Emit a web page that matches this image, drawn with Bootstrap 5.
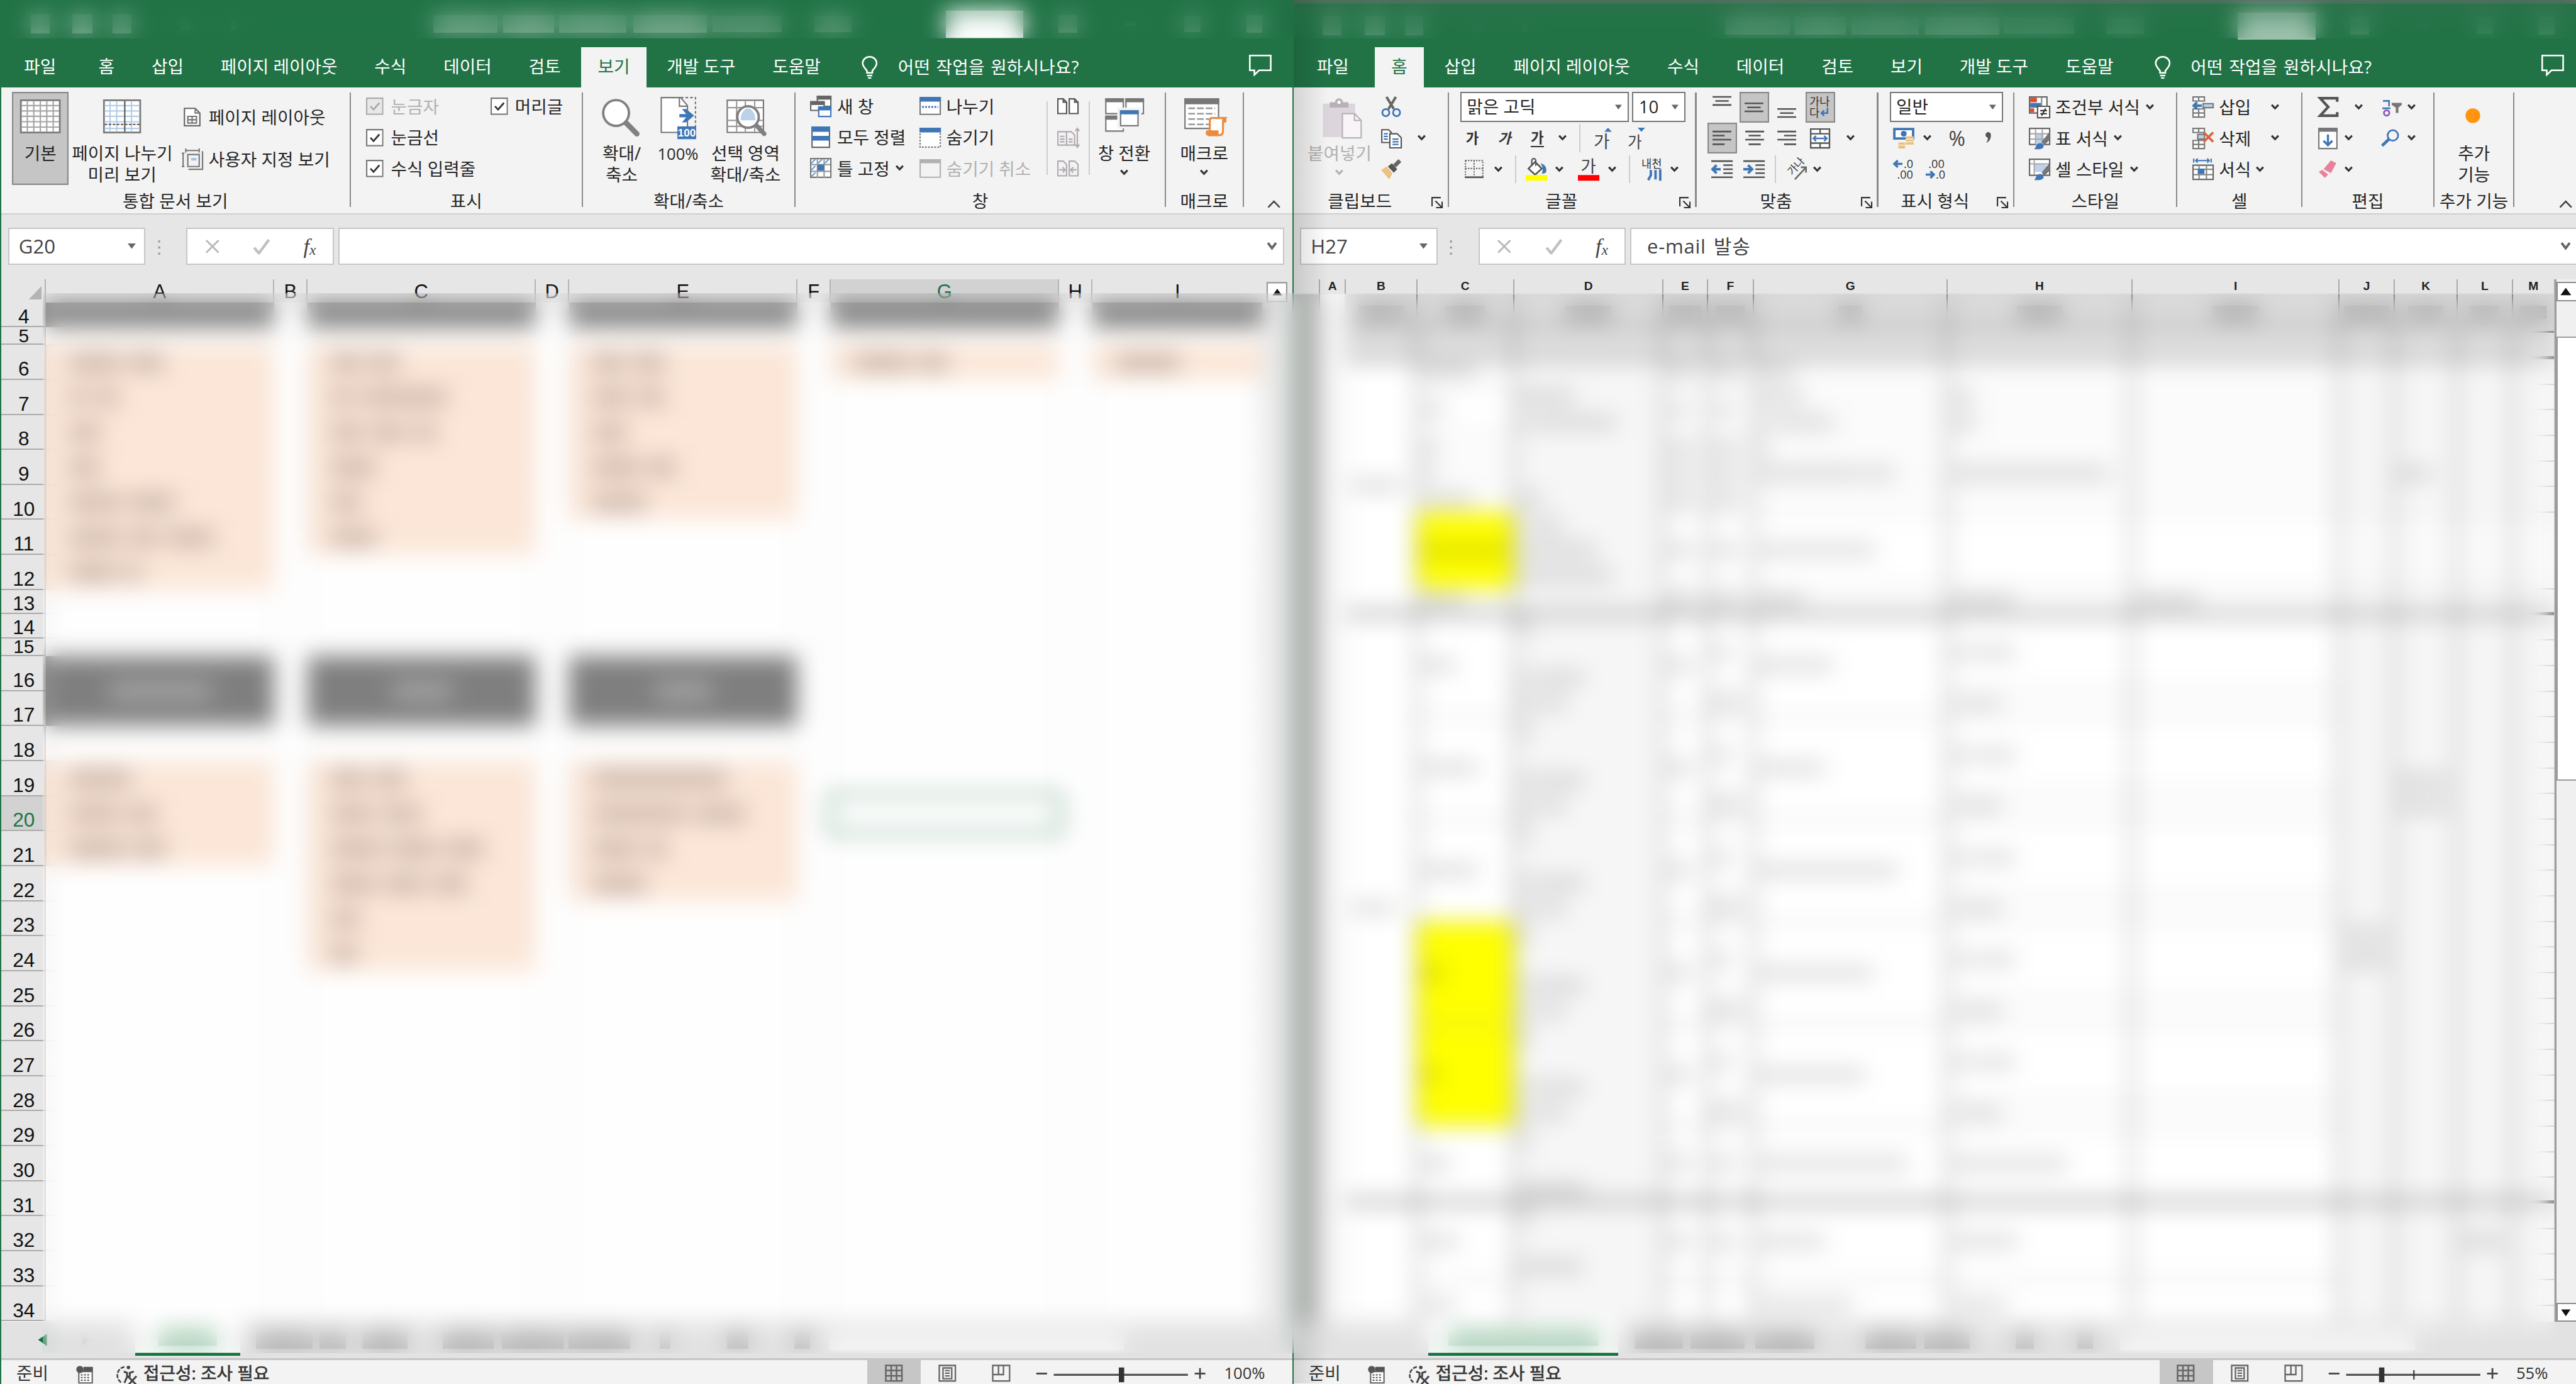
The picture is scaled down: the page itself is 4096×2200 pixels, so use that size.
<!DOCTYPE html>
<html lang="ko">
<head>
<meta charset="utf-8">
<meta name="viewport" content="width=device-width, initial-scale=1">
<title>Excel</title>
<link href="https://cdn.jsdelivr.net/npm/bootstrap@5.3.0/dist/css/bootstrap.min.css" rel="stylesheet">
<style>
html,body{margin:0;overflow:hidden;background:#e6e6e6}
body{font-family:"Open Sans","Noto Sans CJK KR",sans-serif;font-size:13px;line-height:16px;color:#262626}
.desk{zoom:2.133333;width:1920px;height:1031.25px;overflow:hidden}
.win{height:1031.25px;overflow:hidden;background:#e6e6e6;flex:none}
.win-l{width:964px;border-left:1px solid #217346;border-right:1px solid #217346}
.win-r{width:956px}
svg{display:block;flex:none;overflow:visible}
/* title and tabs */
.ttl{height:28.8px;background:#217346;flex:none}
.win-r .ttl{border-top:3px solid #666d69}
.ttl i{display:block;flex:none;background:#fff}
.win-r .ttl i{opacity:.55}
.tabs{height:36.2px;background:#217346;color:#fff;flex:none;padding-left:4.5px;gap:2.7px;font-size:13px}
.win-r .tabs{padding-left:5px}
.tabs .tb{height:30px;line-height:29px;padding:0 12.45px;white-space:nowrap}
.tabs .tb:first-child{margin-right:4px}
.tabs .on{background:#f3f3f3;color:#217346}
.tell{height:30px;line-height:29px;margin-left:15.5px;gap:15px;word-spacing:1px;letter-spacing:.08px}
.cmt{margin:0 15px 8px auto}
.win-r .cmt{margin-right:9px}
/* ribbon */
.rib{height:95px;background:#f3f3f3;border-bottom:1px solid #cfcfcf;flex:none}
.gr{height:94px;padding-top:3.3px;flex:none;white-space:nowrap}
.gb{height:69.4px;flex:none}
.gl{height:21.3px;line-height:24px;flex:none;text-align:center}
.gl .ln{width:16px;padding:9px 0 0 4px}
.sp{width:1px;background:#8a8a8a;margin:4px 0 5px;flex:none}
.sp2{width:1px;background:#cdcdcd;height:55px;margin-top:7px;flex:none}
.vs{width:1px;height:21px;background:#cdcdcd}
.big{height:69.4px;text-align:center;flex:none}
.big svg.ic{margin:4px auto 1.6px}
.big svg.cv{margin:4px auto 0}
.pressed{background:#c5c5c5;box-shadow:inset 0 0 0 1px #8a8a8a}
.off{color:#b1b1b1}
.r3{height:23.1px;display:flex;align-items:center;padding-bottom:1px}
.rw{height:23.13px;display:grid;align-items:center;justify-items:start}
.il{gap:4px}
.cbx{background:#fff;border:1px solid #777;height:22.6px;line-height:20px;padding:0 4px;margin-top:0}
.tg{width:21.7px;height:22.8px;display:flex;align-items:center;justify-content:center}
.l1{width:259.5px}.l2{width:172px}.l3{width:157.7px}.l4{width:274.9px}.l5{width:57.1px}
.bw42{width:41.9px}.bw75{width:75px;margin-left:2.5px}.bw59{width:59px}.bw51{width:51px}
.lst{margin-left:7px;padding-top:3.7px}
.lst .r3{height:31.3px}
.chk{gap:5.3px}
.q1{width:115px}.q2{width:183.5px}.q3{width:134.5px}.q4{width:100.5px}.q5{width:120.5px}.q6{width:92.2px}.q7{width:97.5px}.q8{width:58.5px}
.c1{grid-template-columns:27px auto;padding-left:7px}
.f2{padding-left:12.5px;grid-template-columns:24px 24.5px 20px 16px 11px 25px auto}
.f3{padding-left:11.7px;grid-template-columns:21.5px 15.8px 8.3px 21.5px 17.5px 22px 15.9px 9.3px 21px auto}
.a1{padding-left:10.8px;grid-template-columns:21.4px 27px 22.3px auto}
.a2{padding-left:8.3px;grid-template-columns:27.2px 24px 24.4px 27.6px auto}
.a3{padding-left:10.9px;grid-template-columns:24px 23.4px 8.2px 20px auto}
.n2{padding-left:11px;grid-template-columns:22px 19.5px 26.5px auto}
.n3{padding-left:11px;grid-template-columns:24.5px auto}
.s1{padding-left:10.5px;grid-template-columns:19.9px auto}
.e1{padding-left:11px;grid-template-columns:19.9px 38.3px auto}
.e1b{padding-left:11px;grid-template-columns:19.9px 27.3px auto}
.d1{padding-left:11.7px;grid-template-columns:26.5px 20.8px 18.7px auto}
.d2{padding-left:11.7px;grid-template-columns:19.2px 27.6px 19.1px auto}
.ga{font-size:10.5px;color:#333;line-height:14px}
.gu{border-bottom:1px solid #333;line-height:12px}
/* formula bar */
.fb{height:48.2px;padding-top:9.5px;flex:none;font-size:14.6px;color:#444}
.fb .bx{height:28px;background:#fff;border:1px solid #c6c6c6;flex:none;line-height:27px}
.nm{width:102.4px;margin-left:5.1px;padding:0 6px 0 7px}
.fn{width:109.8px;margin-left:12.5px}
.fn span{font-family:"Liberation Serif",serif;font-size:16px;color:#444}
.fn sub{font-size:11px;bottom:-1px}
.fx{flex:1 1 0!important;margin:0 6px 0 3.4px;padding:0 4px 0 11.5px}
.fx span{word-spacing:1.5px;letter-spacing:.35px}
.win-r .fx{margin-right:-8px}
.win-r .fx svg{margin-right:7px}
.dt{width:18px;padding-left:9px}
/* sheets */
.ghead,.grows{font-family:"Liberation Sans",Arial,sans-serif;font-size:14.5px;color:#111}
.lh{height:17.5px;display:grid;grid-template-columns:33.5px 170px 25px 170px 25px 170px 25px 170px 25px 126.5px 22px;flex:none;overflow:hidden}
.lh div{border-right:1px solid #b5b5b5;text-align:center;line-height:18.5px}
.lh .gsel{background:#d2d2d2;color:#217346;border-bottom:2px solid #217346}
.lg{height:759.3px;display:grid;grid-template-columns:33.5px 170px 25px 170px 25px 170px 25px 170px 25px 126.5px 22px;overflow:hidden;flex:none;background:#fff}
.lg .rh{grid-column:1;background:#e6e6e6;border-bottom:1px solid #ababab;display:flex;align-items:flex-end;justify-content:center;line-height:14px;border-right:1px solid #bbb;font-size:14.8px;padding-left:1px}
.lg .rh.cut{line-height:12px;font-size:14px}
.lg .rh.sel{background:#d2d2d2;color:#217346}
.lg .pc{background:#fce7d8;border:1px solid #ecdccf;display:flex;align-items:center;padding-left:16px;gap:6px}
.lg .dk{background:#7f7f7f;display:flex;align-items:center;justify-content:center}
.lg .gc{border-right:1px solid #e2e2e2;border-bottom:1px solid #eaeaea}
.lg .cur{border:2px solid #217346;margin:-2px}
.lg .sb{grid-column:11;background:#e9e9e9}
.wd{display:block;height:12px;background:rgba(60,40,40,.27);flex:none}
.dk .wd{background:rgba(255,255,255,.35)}
.rhd{height:11px;display:flex;font-size:9px;font-weight:600;font-family:"Liberation Sans",sans-serif;flex:none;line-height:10px;color:#222}
.rhd div{border-right:1px solid #aaa;text-align:center;flex:none}
.rgrid{height:766px;flex:none;overflow:hidden}
.rc{flex:none;background:#fff;border-right:1.4px solid #222}
.rc:last-child{border-right-color:#aaa}
.rc div{display:flex;align-items:center;border-bottom:1px solid #aaa;padding-left:3px;overflow:hidden}
.rc div.hd{background:#d9d9d9;height:28.8px;justify-content:center;border-bottom:1.6px solid #333;padding:0}
.rc div.sh{height:19.6px;background:#ececec;border-bottom:2.4px solid #444}
.rc div.th{border-bottom:2.6px solid #333}
.rc div.yl{background:#ff0}
.rc .wd{height:7px;background:rgba(0,0,0,.2)}
.rc .hd .wd{height:10px;background:rgba(0,0,0,.25)}
.vbar{width:16px;background:#f0f0f0;flex:none}
.vbar .ub{height:14.5px;border:1px solid #8d8d8d;background:#fff}
.vbar .tm{border:1px solid #9c9c9c;background:#fff;height:331px}
.st{height:28.4px;flex:none;background:#e2e2e2;border-bottom:1.5px solid #c6c6c6}
.st .act{background:linear-gradient(#fff,#fafcfa);border-bottom:2.4px solid #107040;height:25.4px;display:flex;align-items:center;justify-content:center}
.st .act i{height:12px;background:#a5ccb3}
.st .wd{height:13px;background:rgba(0,0,0,.2)}
.st .hs{height:13px;background:#f6f6f6;margin-top:8px}
.stat{height:18px;background:#f3f3f3;flex:none;line-height:19px;color:#333}
.stat b{font-weight:400;-webkit-text-stroke:.3px #333}
.stat .vw{width:40px;height:18px;display:flex;justify-content:center;padding-top:3.5px}
.stat .vw.on{background:#c6c6c6}
/* frosted panes lying over the title bars and the sheets */
.desk{position:relative}
.frost{position:absolute;backdrop-filter:blur(8.5px);pointer-events:none}
.frost-t{left:0;top:0;width:1920px;height:28.8px}
.frost-s{left:32px;top:218.6px;width:1872.4px;height:789.8px}
.shade{position:absolute;left:964px;top:0;width:26px;height:1031px;background:linear-gradient(90deg,rgba(0,0,0,.13),rgba(0,0,0,0))}
</style>
</head>
<body>
<svg width="0" height="0" class="position-absolute">
<defs>
<symbol id="cv" viewBox="0 0 7 5"><path d="M1 .8 3.5 3.4 6 .8" fill="none" stroke="#333" stroke-width="1.5"/></symbol>
<symbol id="cvg" viewBox="0 0 8 7"><path d="M1 1 4 5 7 1" fill="none" stroke="#666" stroke-width="1.8"/></symbol>
<symbol id="cvo" viewBox="0 0 7 5"><path d="M1 .8 3.5 3.4 6 .8" fill="none" stroke="#b1b1b1" stroke-width="1.5"/></symbol>
<symbol id="tri" viewBox="0 0 7 4"><path d="M.5 0h6L3.500 4z" fill="#666"/></symbol>
<symbol id="lau" viewBox="0 0 9 9"><path d="M.5 7V.5H7M3 3l4.500 4.500M8 3.500V8H3.500" fill="none" stroke="#333" stroke-width="1"/></symbol>
<symbol id="ck" viewBox="0 0 13 13"><path d="M.5.5h12v12H.5z" fill="#fff" stroke="#777"/><path d="m3.300 6.500 2.300 2.500L10 4" fill="none" stroke="#333" stroke-width="1.300"/></symbol>
<symbol id="cko" viewBox="0 0 13 13"><path d="M.5.5h12v12H.5z" fill="#e8e8e8" stroke="#aaa"/><path d="m3.300 6.500 2.300 2.500L10 4" fill="none" stroke="#aaa" stroke-width="1.300"/></symbol>
<symbol id="up" viewBox="0 0 10 6"><path d="m.7 5.500 4.300-4.500 4.300 4.500" fill="none" stroke="#444" stroke-width="1.200"/></symbol>
<symbol id="bulb" viewBox="0 0 12 17"><path d="M4 12.500V11C3 9.500.8 8 .8 5.300a5.200 4.700 0 0 1 10.400 0C11.200 8 9 9.500 8 11v1.500zM4 14.500h4M4.800 16.400h2.400" fill="none" stroke="#fff" stroke-width="1.200"/></symbol>
<symbol id="cm" viewBox="0 0 17 16"><path d="M.6.6h15.600v11H7.500L4 15v-3.400H.6z" fill="none" stroke="#fff" stroke-width="1.200"/></symbol>
<symbol id="xx" viewBox="0 0 12 12"><path d="m1 1 10 10M11 1 1 11" stroke="#b9b9b9" stroke-width="1.500"/></symbol>
<symbol id="vv" viewBox="0 0 13 12"><path d="m1 7 3.500 4L12 1" fill="none" stroke="#c0c0c0" stroke-width="2"/></symbol>
<symbol id="mac" viewBox="0 0 14 14"><path d="M2.500 4.500h10V13h-10z" fill="#fff" stroke="#666"/><path d="M6 1h7v3.500H6z" fill="#555"/><circle cx="3.300" cy="3" r="2.700" fill="#555"/><path d="M4 7h7M4 9h7M4 11h7" stroke="#555" stroke-dasharray="1.400 1"/></symbol>
<symbol id="acc" viewBox="0 0 16 15"><path d="M6 1A6.500 6.500 0 0 0 4 13" fill="none" stroke="#444" stroke-width="1.200" stroke-dasharray="3 1"/><circle cx="9" cy="1.500" r="1.300" fill="#444"/><path d="M5.500 4.500 8 5.500v3L6 13M13 4.500l-3 1v3M8.500 8l6.500 6.500M15 8l-6 6.500" fill="none" stroke="#444" stroke-width="1.400"/></symbol>
<symbol id="v1" viewBox="0 0 14 13"><path d="M.7.7h12v11.600h-12zM.7 4.500h12M.7 8.400h12M4.700.7v11.600M8.700.7v11.600" fill="none" stroke="#666" stroke-width="1.200"/></symbol>
<symbol id="v2" viewBox="0 0 14 13"><path d="M.7.7h12v11.600h-12zM3.500 2.600h6.500v8H3.500zM5 4.500h3.500M5 6.500h3.500M5 8.500h3.500" fill="none" stroke="#666" stroke-width="1.100"/></symbol>
<symbol id="v3" viewBox="0 0 14 13"><path d="M.7.7h12.600v11.600H.7zM.7 7.500h8V.7M5 .7v6.800" fill="none" stroke="#666" stroke-width="1.100"/></symbol>
</defs>
</svg>
<div class="desk d-flex">

<!-- left window: view tab -->
<div class="win win-l d-flex flex-column">
<div class="ttl d-flex align-items-center" data-title></div>
<div class="tabs d-flex align-items-end">
<div class="tb">파일</div><div class="tb">홈</div><div class="tb">삽입</div><div class="tb">페이지 레이아웃</div><div class="tb">수식</div><div class="tb">데이터</div><div class="tb">검토</div><div class="tb on">보기</div><div class="tb">개발 도구</div><div class="tb">도움말</div>
<div class="tell d-flex align-items-center"><svg width="12" height="17"><use href="#bulb"/></svg>어떤 작업을 원하시나요?</div>
<svg class="cmt" width="17" height="16"><use href="#cm"/></svg>
</div>
<div class="rib d-flex">
 <div class="gr l1 d-flex flex-column">
  <div class="gb d-flex" style="padding-left:8.2px">
   <div class="big bw42 pressed"><svg class="ic" width="32" height="32"><path d="M1.500 2.500h29v24h-29z" fill="#fff" stroke="#7a7a7a" stroke-width="1.300"/><path d="M6.300 3v23M11.100 3v23M16 3v23M20.800 3v23M25.600 3v23M2 6.500h28M2 10.500h28M2 14.500h28M2 18.500h28M2 22.500h28" stroke="#a5a5a5"/></svg>기본</div>
   <div class="big bw75"><svg class="ic" width="32" height="32"><path d="M2.500 2.500h27v24h-27z" fill="#fff" stroke="#7a7a7a" stroke-width="1.300"/><path d="M7 3v23M12 3v23M23 3v23M3 6.500h26M3 10.500h26M3 14.500h26M3 18.500h26M3 23.500h26" stroke="#b4cde8"/><path d="M18 3v23" stroke="#555"/><path d="M3 20.500h26" stroke="#555" stroke-dasharray="2 1"/></svg>페이지 나누기<br>미리 보기</div>
   <div class="lst">
    <div class="r3 il"><svg width="16" height="16"><path d="M2 1.500h8l3.500 3.500v9.500H2z" fill="#fff" stroke="#666"/><path d="M10 1.500V5h3.500M4.500 7.500h6.500v5h-6.500zM7.700 7.500v5M4.500 10h6.500" fill="none" stroke="#777"/></svg>페이지 레이아웃</div>
    <div class="r3 il"><svg width="16" height="16"><path d="M3 0v3M13 0v3M3 1.500h10M1 3.500v10M0 3.500h2M0 13.500h2M4.500 4.500h8.500v9h-8.500z" fill="none" stroke="#777"/><path d="M7 7h4v2H7z" fill="#a8c6e6"/><path d="M15.500 2v13.500H5" fill="none" stroke="#777"/></svg>사용자 지정 보기</div>
   </div>
  </div>
  <div class="gl">통합 문서 보기</div>
 </div>
 <div class="sp"></div>
 <div class="gr l2 d-flex flex-column">
  <div class="gb d-flex" style="padding-left:11.600px">
   <div style="width:92.500px">
    <div class="r3 chk off"><svg width="13" height="13"><use href="#cko"/></svg>눈금자</div>
    <div class="r3 chk"><svg width="13" height="13"><use href="#ck"/></svg>눈금선</div>
    <div class="r3 chk"><svg width="13" height="13"><use href="#ck"/></svg>수식 입력줄</div>
   </div>
   <div><div class="r3 chk"><svg width="13" height="13"><use href="#ck"/></svg>머리글</div></div>
  </div>
  <div class="gl">표시</div>
 </div>
 <div class="sp"></div>
 <div class="gr l3 d-flex flex-column">
  <div class="gb d-flex ps-2">
   <div class="big bw42"><svg class="ic" width="32" height="32"><circle cx="12" cy="12" r="9.600" fill="#fff" stroke="#808080" stroke-width="1.800"/><path d="m19.500 19.500 8 8" stroke="#808080" stroke-width="4" stroke-linecap="round"/></svg>확대/<br>축소</div>
   <div class="big bw42"><svg class="ic" width="32" height="32"><path d="M3.500.5H18l5 6v20H3.500z" fill="#fff" stroke="#777"/><path d="M17 .5V7h6" fill="none" stroke="#777"/><path d="M18 .5h11v22" fill="none" stroke="#777" stroke-dasharray="2 1.500"/><path d="M17 14h8" stroke="#3f76b5" stroke-width="2.400"/><path d="m22 9 6 5-6 5h-3l4-5-4-5z" fill="#3f76b5"/><path d="M15.500 22h14v9.500h-14z" fill="#3f76b5"/><text x="22.500" y="29.500" font-size="8" font-weight="700" fill="#fff" text-anchor="middle" font-family="Liberation Sans">100</text></svg><span style="font-size:12px">100%</span></div>
   <div class="big bw59"><svg class="ic" width="32" height="32"><path d="M2.500 2.500h27v24h-27z" fill="#fff" stroke="#777"/><path d="M9.500 3v23M16 3v23M23 3v23M3 8h26M3 17.500h26M3 22h26" stroke="#9a9a9a"/><circle cx="18" cy="15" r="8" fill="#fff" stroke="#808080" stroke-width="1.800"/><path d="M12.500 17.500a5.500 9 0 0 1 11 0z" fill="#bcd2ea"/><path d="m24.500 21.500 5.500 6" stroke="#808080" stroke-width="3.400" stroke-linecap="round"/></svg>선택 영역<br>확대/축소</div>
  </div>
  <div class="gl">확대/축소</div>
 </div>
 <div class="sp"></div>
 <div class="gr l4 d-flex flex-column">
  <div class="gb d-flex" style="padding-left:10.800px">
   <div style="width:81.400px">
    <div class="r3 il"><svg width="16" height="16"><path d="M5.500 1h10v7h-10z" fill="#fff" stroke="#666"/><path d="M5 0h11v3H5z" fill="#666"/><path d="M.5 5h10v6H.5z" fill="#fff" stroke="#666"/><path d="M0 4h11v3H0z" fill="#666"/><path d="M6.500 9h9v6.500h-9z" fill="#fff" stroke="#3f76b5"/><path d="M6 8h10v3H6z" fill="#3f76b5"/></svg>새 창</div>
    <div class="r3 il"><svg width="16" height="16"><path d="M1.500.5h13v15h-13z" fill="#fff" stroke="#666"/><path d="M1 0h14v4H1zM1 7h14v3.500H1z" fill="#3f76b5"/></svg>모두 정렬</div>
    <div class="r3 il"><svg width="16" height="16"><path d="M.5.5h15v14H.5z" fill="#fff" stroke="#777"/><path d="M5.500 1v14M10.500 1v14M1 5h14M1 10h14" stroke="#999"/><path d="m1 4 3-3M6 4l3-3M11 4l3-3M1 9l3-3M1 14l3-3" stroke="#6a9bd1"/><path d="M5.500 5h5v4.500h-5z" fill="#3f76b5"/></svg>틀 고정<svg width="7" height="5"><use href="#cv"/></svg></div>
   </div>
   <div style="width:94.600px">
    <div class="r3 il"><svg width="16" height="14"><path d="M.5.5h15v12.500H.5z" fill="#fff" stroke="#777"/><path d="M0 0h16v3.500H0z" fill="#3f76b5"/><path d="M2 7.500h12" stroke="#3f76b5" stroke-width="1.300" stroke-dasharray="1.300 1"/></svg>나누기</div>
    <div class="r3 il"><svg width="16" height="15"><path d="M.5.5h15v14H.5z" fill="#fff" stroke="#777" stroke-dasharray="1.300 1"/><path d="M0 0h16v3.500H0z" fill="#3f76b5"/></svg>숨기기</div>
    <div class="r3 il off"><svg width="16" height="14"><path d="M.5.5h15v13H.5z" fill="#f3f3f3" stroke="#b1b1b1"/><path d="M0 0h16v3H0z" fill="#b1b1b1"/></svg>숨기기 취소</div>
   </div>
   <div class="sp2"></div>
   <div style="width:30.500px;padding-left:7px">
    <div class="r3"><svg width="16" height="12"><path d="M.5.500h4l2.500 2.500v8.500H.5zM9 .500h4L15.500 3v8.500H9zM4.500.500V3H7M13 .500V3h2.500" fill="#fff" stroke="#555"/></svg></div>
    <div class="r3"><svg width="16" height="14"><path d="M.5 2.500h6.500v10H.5zM7 2.500h3.500L13 5v7.500H7z" fill="#f3f3f3" stroke="#b1a9b1"/><path d="M2 6h3.500M2 8h3.500M8.500 8h3M8.500 10h3M2 10h3.500M15 0v14M13.500 2 15 0l1.500 2M13.500 12l1.500 2 1.500-2" stroke="#b1a9b1" fill="none"/></svg></div>
    <div class="r3"><svg width="16" height="12"><path d="M.5.500h4l2.500 2.500v8.500H.5zM9 .500h4L15.500 3v8.500H9z" fill="#f3f3f3" stroke="#b1a9b1"/><path d="M1.500 7h4M4 5l2 2-2 2M14.500 7h-4M12 5l-2 2 2 2" fill="none" stroke="#b1a9b1"/></svg></div>
   </div>
   <div class="sp2"></div>
   <div class="big bw51"><svg class="ic" width="32" height="32"><path d="M2.500 1.500h13v11h-13zM17.500 1.500h13v11h-13zM2.500 14.500h13v11h-13z" fill="#fff" stroke="#777"/><path d="M2 1h14v3H2zM17 1h14v3H17zM2 14h14v3H2z" fill="#777"/><path d="M12.500 9.500h15v12.500h-15z" fill="#fff" stroke="#f3f3f3" stroke-width="3"/><path d="M13.500 10.500h13v11h-13z" fill="#fff" stroke="#777"/><path d="M13 10h14v3H13z" fill="#3f76b5"/></svg>창 전환<svg class="cv" width="7" height="5"><use href="#cv"/></svg></div>
  </div>
  <div class="gl">창</div>
 </div>
 <div class="sp"></div>
 <div class="gr l5 d-flex flex-column">
  <div class="big"><svg class="ic" width="32" height="32"><path d="M1.500 1.500h25v22h-25z" fill="#fff" stroke="#777"/><path d="M1 1h26v4.500H1z" fill="#777"/><path d="M4 8.500h20M4 12.500h20M4 16.500h20M4 20.500h16" stroke="#999" stroke-width="1.200" stroke-dasharray="5 1.500"/><path d="M21 15.800h10c-1.500 1-1.200 3-1.200 4v5.700c0 2-.8 3-2.600 3H18.500c1.800-.5 1.500-2 1.500-3.500v-6.200c0-1.500 0-2.500 1-3z" fill="#fff" stroke="#ed8b3c" stroke-width="1.500"/><path d="M29.500 15.200h2.500c.8 1.500.5 3 0 4h-2.500zM17.500 25h9v3.800h-8c-1.500 0-2-2-1-3.800z" fill="#ed8b3c"/></svg>매크로<svg class="cv" width="7" height="5"><use href="#cv"/></svg></div>
  <div class="gl">매크로</div>
 </div>
 <div class="sp"></div>
 <div class="ms-auto align-self-end" style="padding:0 8.500px 4px 0"><svg width="10" height="6"><use href="#up"/></svg></div>
</div>
<div class="fb d-flex">
 <div class="bx nm d-flex align-items-center justify-content-between">G20<svg width="7" height="4"><use href="#tri"/></svg></div>
 <div class="dt"><svg width="2" height="28"><path d="M1 9.500v11" stroke="#999" stroke-width="1.500" stroke-dasharray="1.500 3"/></svg></div>
 <div class="bx fn d-flex align-items-center justify-content-around"><svg width="12" height="11"><use href="#xx"/></svg><svg width="13" height="12"><use href="#vv"/></svg><span class="fst-italic">f<sub>x</sub></span></div>
 <div class="bx fx d-flex align-items-center justify-content-end"><svg width="8" height="7"><use href="#cvg"/></svg></div>
</div>
<div class="lh ghead"><div><svg width="33" height="17"><path d="M30 5v10H20.500z" fill="#b4b4b4"/></svg></div><div>A</div><div>B</div><div>C</div><div>D</div><div>E</div><div>F</div><div class="gsel">G</div><div>H</div><div class="border-0">I</div><div class="d-flex border-0"><svg width="15" height="17" class="ms-1"><path d="M-.5 2.500h14.500v14H-.5z" fill="#fff" stroke="#999"/><path d="M7 7l3.500 5h-7z" fill="#111"/></svg></div></div>
<div class="lg grows" id="lgrid"></div>
<div class="st d-flex" id="ltabs"></div>
<div class="stat d-flex" data-zoom="100"></div>
</div>

<!-- right window: home tab -->
<div class="win win-r d-flex flex-column">
<div class="ttl d-flex align-items-center" data-title></div>
<div class="tabs d-flex align-items-end">
<div class="tb">파일</div><div class="tb on">홈</div><div class="tb">삽입</div><div class="tb">페이지 레이아웃</div><div class="tb">수식</div><div class="tb">데이터</div><div class="tb">검토</div><div class="tb">보기</div><div class="tb">개발 도구</div><div class="tb">도움말</div>
<div class="tell d-flex align-items-center"><svg width="12" height="17"><use href="#bulb"/></svg>어떤 작업을 원하시나요?</div>
<svg class="cmt" width="17" height="16"><use href="#cm"/></svg>
</div>
<div class="rib d-flex">
 <div class="gr q1 d-flex flex-column">
  <div class="gb d-flex" style="padding-left:10.500px">
   <div class="big off" style="width:47.500px"><svg class="ic" width="32" height="32"><path d="M4 5h24v25H4z" fill="#dcd6dc"/><path d="M9 8V4h4a3 3 0 0 1 6 0h4v4z" fill="#b8b2b8"/><circle cx="16" cy="4" r="1.200" fill="#fff"/><path d="M18.500 12.500h9l5 5v13h-14z" fill="#f8f4f8" stroke="#b8b2b8"/><path d="M27.500 12.500v5h5" fill="none" stroke="#b8b2b8"/></svg>붙여넣기<svg class="cv" width="7" height="5"><use href="#cvo"/></svg></div>
   <div>
    <div class="rw c1"><svg width="16" height="16"><path d="m4.500.5 5.500 9M11.500.5 6 9.500" stroke="#666" stroke-width="1.900"/><circle cx="4" cy="12.200" r="2.600" fill="none" stroke="#3f76b5" stroke-width="1.300"/><circle cx="12" cy="12.200" r="2.600" fill="none" stroke="#3f76b5" stroke-width="1.300"/></svg></div>
    <div class="rw c1"><svg width="16" height="16"><path d="M1 1.500h5l2 2V11H1z" fill="#fff" stroke="#555"/><path d="M7 4.500h5.500L15.500 7.500v7.500H7z" fill="#fff" stroke="#555"/><path d="M2.500 4.500h3M2.500 6.500h3M2.500 8.500h3M9 8.500h4.500M9 10.500h4.500M9 12.500h4.500" stroke="#3f76b5"/></svg><svg width="7" height="5"><use href="#cv"/></svg></div>
    <div class="rw c1"><svg width="16" height="16"><path d="m.5 8.500 4-2.500 4.500 5-2.500 4.500z" fill="#eac282"/><path d="m5.500 6 3-2.500 4 4.500-2.500 2.500z" fill="#555"/><path d="m10.500 5.500 4-4" stroke="#666" stroke-width="3"/></svg></div>
   </div>
  </div>
  <div class="gl d-flex"><div class="flex-grow-1">클립보드</div><div class="ln"><svg width="9" height="9"><use href="#lau"/></svg></div></div>
 </div>
 <div class="sp"></div>
 <div class="gr q2 d-flex flex-column">
  <div class="gb">
   <div class="d-flex" style="height:23.130px;padding-left:8.300px;gap:2.500px"><div class="cbx d-flex align-items-center justify-content-between" style="width:125.700px">맑은 고딕<svg width="6" height="4"><use href="#tri"/></svg></div><div class="cbx d-flex align-items-center justify-content-between" style="width:39.800px">10<svg width="6" height="4"><use href="#tri"/></svg></div></div>
   <div class="rw f2"><span class="ga fw-bold">가</span><span class="ga fst-italic fw-bold">가</span><span class="ga gu fw-bold">가</span><svg width="7" height="5"><use href="#cv"/></svg><div class="vs"></div><svg width="14" height="16"><text x="0" y="15" font-size="13" fill="#444">가</text><path d="M8 3h5.500L10.700 0z" fill="#3f76b5"/></svg><svg width="14" height="16"><text x="0" y="15" font-size="11.500" fill="#444">가</text><path d="M7.500 0H13l-2.700 3z" fill="#3f76b5"/></svg></div>
   <div class="rw f3"><svg width="14" height="14"><path d="M.5.5h13v12M.5.500v12M7 .500v12M.5 6.500h13" fill="none" stroke="#666" stroke-dasharray="1 1"/><path d="M0 13h14" stroke="#555" stroke-width="1.300"/></svg><svg width="7" height="5"><use href="#cv"/></svg><div class="vs"></div><svg width="16" height="17"><path d="m2 8 5-5 5 5-5 4.500z" fill="#fff" stroke="#555" stroke-width="1.200"/><path d="M4.500 6V2a1.500 1.500 0 0 1 3 0v4" fill="none" stroke="#555"/><path d="M11 4c4 1 5 4 4 7l-3 1c1-3 1-5-1-8z" fill="#3f76b5"/><path d="M0 12.800h16V17H0z" fill="#ff0"/></svg><svg width="7" height="5"><use href="#cv"/></svg><svg width="16" height="17"><text x="2" y="11" font-size="12.500" fill="#444">가</text><path d="M0 12.800h16V17H0z" fill="red"/></svg><svg width="7" height="5"><use href="#cv"/></svg><div class="vs"></div><svg width="16" height="17"><text x="0" y="7.500" font-size="8.300" fill="#333">내천</text><path d="M7 9v4l-2 3.500M10.500 9v7M14 8.500V17" fill="none" stroke="#3f76b5" stroke-width="1.800"/></svg><svg width="7" height="5"><use href="#cv"/></svg></div>
  </div>
  <div class="gl d-flex"><div class="flex-grow-1">글꼴</div><div class="ln"><svg width="9" height="9"><use href="#lau"/></svg></div></div>
 </div>
 <div class="sp"></div>
 <div class="gr q3 d-flex flex-column">
  <div class="gb">
   <div class="rw a1"><svg width="16" height="16"><path d="M1 .5h14M3 3.500h10M1 6.500h14" stroke="#555" stroke-width="1.200"/></svg><div class="tg pressed"><svg width="14" height="10"><path d="M0 2h14M2 5h10M0 8h14" stroke="#555" stroke-width="1.200"/></svg></div><svg width="16" height="16"><path d="M1 9.500h14M3 12.500h10M1 15.500h14" stroke="#555" stroke-width="1.200"/></svg><div class="tg pressed"><svg width="16" height="17"><text x="0" y="7.500" font-size="8.300" fill="#333">가나</text><text x="0" y="16" font-size="8.300" fill="#333">다</text><path d="M13.500 9v4h-4M11 11l-2 2 2 2" fill="none" stroke="#3f76b5" stroke-width="1.200"/></svg></div></div>
   <div class="rw a2"><div class="tg pressed"><svg width="14" height="12"><path d="M0 1h14M0 4h9M0 7h14M0 10.500h9" stroke="#555" stroke-width="1.200"/></svg></div><svg width="16" height="12"><path d="M1 1h14M3.500 4h9M1 7h14M3.500 10.500h9" stroke="#555" stroke-width="1.200"/></svg><svg width="16" height="12"><path d="M1 1h14M6 4h9M1 7h14M6 10.500h9" stroke="#555" stroke-width="1.200"/></svg><svg width="16" height="16"><path d="M1 1h14v14H1zM1 4.500h14M1 11.500h14M8 1v3.500M8 11.500V15" fill="#fff" stroke="#555" stroke-width="1.100"/><path d="M3 8h10M5 6 3 8l2 2M11 6l2 2-2 2" fill="none" stroke="#3f76b5" stroke-width="1.200"/></svg><svg width="7" height="5"><use href="#cv"/></svg></div>
   <div class="rw a3"><svg width="16" height="14"><path d="M0 1h16M9 4h7M9 7h7M9 10h7M0 13h16" stroke="#555" stroke-width="1.200"/><path d="M1 7h6M4 4 1 7l3 3" fill="none" stroke="#3f76b5" stroke-width="1.900"/></svg><svg width="16" height="14"><path d="M0 1h16M9 4h7M9 7h7M9 10h7M0 13h16" stroke="#555" stroke-width="1.200"/><path d="M0 7h6M3.500 4l3 3-3 3" fill="none" stroke="#3f76b5" stroke-width="1.900"/></svg><div class="vs"></div><svg width="16" height="16"><text font-size="7.800" fill="#333" transform="translate(5 13) rotate(-48)">가나</text><path d="m7 15.500 8-8.500M11.500 6.500h3.800v4" fill="none" stroke="#666" stroke-width="1.200"/></svg><svg width="7" height="5"><use href="#cv"/></svg></div>
  </div>
  <div class="gl d-flex"><div class="flex-grow-1">맞춤</div><div class="ln"><svg width="9" height="9"><use href="#lau"/></svg></div></div>
 </div>
 <div class="sp"></div>
 <div class="gr q4 d-flex flex-column">
  <div class="gb">
   <div style="height:23.130px;padding-left:8.400px"><div class="cbx d-flex align-items-center justify-content-between" style="width:84.600px">일반<svg width="6" height="4"><use href="#tri"/></svg></div></div>
   <div class="rw n2"><svg width="16" height="16"><path d="M1 1h14v7H1z" fill="#fff" stroke="#3f76b5" stroke-width="1.800"/><circle cx="8" cy="4.500" r="2.200" fill="#3f76b5"/><path d="M9.500 6.500h6v6h-6zM4 11h5v4.500H4z" fill="#ebbd7b"/><path d="M9.500 8.500h6M9.500 10.500h6M4 13h5" stroke="#f3f3f3" stroke-width=".7"/></svg><svg width="7" height="5"><use href="#cv"/></svg><span style="font-size:15px;color:#444">%</span><svg width="6" height="10"><path d="M1 2.500a2 2 0 1 1 4 0C5 5.500 4 7.500 1.500 8.500 2.500 7 3 6 2.500 4.500A2 2 0 0 1 1 2.500z" fill="#555"/></svg></div>
   <div class="rw n3"><svg width="16" height="15"><text x="8" y="6.500" font-size="8.500" fill="#333">.0</text><text x="3" y="14.500" font-size="8.500" fill="#333">.00</text><path d="M1 3.500h6M3.600 1 1 3.500 3.600 6" fill="none" stroke="#3f76b5" stroke-width="1.700"/></svg><svg width="16" height="15"><text x="2" y="6.500" font-size="8.500" fill="#333">.00</text><text x="7.500" y="14.500" font-size="8.500" fill="#333">.0</text><path d="M0 11.500h6M3.500 9 6 11.500 3.500 14" fill="none" stroke="#3f76b5" stroke-width="1.700"/></svg></div>
  </div>
  <div class="gl d-flex"><div class="flex-grow-1">표시 형식</div><div class="ln"><svg width="9" height="9"><use href="#lau"/></svg></div></div>
 </div>
 <div class="sp"></div>
 <div class="gr q5 d-flex flex-column">
  <div class="gb">
   <div class="rw s1"><svg width="16" height="16"><path d="M.5.500h13v12H.5z" fill="#fff" stroke="#666"/><path d="M1 1h5v3.500H1zM1 9h3v3H1z" fill="#d8502f"/><path d="M1 5h8v3.500H1z" fill="#3f76b5"/><path d="M9.500 1v6" stroke="#888"/><path d="M6.500 7.500h9v8.500h-9z" fill="#fff" stroke="#555"/><path d="M8.500 10.700h5M8.500 13h5M12.500 9l-3 5.500" stroke="#333"/></svg><div class="d-flex align-items-center il">조건부 서식<svg width="7" height="5"><use href="#cv"/></svg></div></div>
   <div class="rw s1"><svg width="16" height="16"><path d="M.5.500h15v12H.5z" fill="#fff" stroke="#666"/><path d="M5 4.500h6v8H5z" fill="#bcd2ea"/><path d="M5 1v11M10 1v11M1 4.500h14M1 8.500h14" stroke="#aaa"/><path d="m9.500 10.500 6-7.500v6l-4 4z" fill="#777"/><path d="M4 16c1.500-1 1-4 4-4.500 2-.3 4 2 2.500 3.500S6 16 4 16z" fill="#3f76b5"/></svg><div class="d-flex align-items-center il">표 서식<svg width="7" height="5"><use href="#cv"/></svg></div></div>
   <div class="rw s1"><svg width="16" height="16"><path d="M.5.500h15v12H.5z" fill="#fff" stroke="#666"/><path d="M4 4h9v6H4z" fill="#bcd2ea"/><path d="M4 1v11M1 4h14" stroke="#aaa"/><path d="m9.500 10.500 6-7.500v6l-4 4z" fill="#777"/><path d="M4 16c1.500-1 1-4 4-4.500 2-.3 4 2 2.500 3.500S6 16 4 16z" fill="#3f76b5"/></svg><div class="d-flex align-items-center il">셀 스타일<svg width="7" height="5"><use href="#cv"/></svg></div></div>
  </div>
  <div class="gl">스타일</div>
 </div>
 <div class="sp"></div>
 <div class="gr q6 d-flex flex-column">
  <div class="gb">
   <div class="rw e1"><svg width="16" height="16"><path d="M.5.500h8.500v3H.5zM4.700.500v3M.5 9.500h8.500v6H.5zM4.700 9.500v6M.5 12.500h8.500" fill="#fff" stroke="#777"/><path d="M8 5.500h7.500v3H8z" fill="#bcd2ea" stroke="#777"/><path d="M1 7h6M3.500 4.500 1 7l2.500 2.500" fill="none" stroke="#3f76b5" stroke-width="1.900"/></svg>삽입<svg width="7" height="5"><use href="#cv"/></svg></div>
   <div class="rw e1"><svg width="16" height="16"><path d="M.5.500h8.500v3H.5zM4.700.500v3M.5 9.500h8.500v6H.5zM4.700 9.500v6M.5 12.500h8.500" fill="#fff" stroke="#777"/><path d="M4 5h5v3.500H4z" fill="#bcd2ea" stroke="#777"/><path d="m8.500 3.500 7 7M15.500 3.500l-7 7" stroke="#dc6244" stroke-width="1.700"/></svg>삭제<svg width="7" height="5"><use href="#cv"/></svg></div>
   <div class="rw e1b"><svg width="16" height="16"><path d="M1 0v3M14 0v3M2 1.500h11M4 0 2.500 1.500 4 3M11 0l1.500 1.500L11 3" fill="none" stroke="#3f76b5"/><path d="M.5 5h15v10.500H.5z" fill="#fff" stroke="#666"/><path d="M5 5v10M10.500 5v10M1 8h14M1 12h14" stroke="#888"/><path d="M4 7.500h5v4H4z" fill="#3f76b5"/></svg>서식<svg width="7" height="5"><use href="#cv"/></svg></div>
  </div>
  <div class="gl">셀</div>
 </div>
 <div class="sp"></div>
 <div class="gr q7 d-flex flex-column">
  <div class="gb">
   <div class="rw d1"><svg width="15" height="15"><path d="M14.200 3.600V1H1.500l6 6.500-6 6.500h12.700v-2.600" fill="none" stroke="#555" stroke-width="2"/></svg><svg width="7" height="5"><use href="#cv"/></svg><svg width="15" height="15"><path d="M1 3h4.500v4M.5 8.500h6" fill="none" stroke="#3f76b5" stroke-width="1.200"/><circle cx="3.700" cy="12" r="2" fill="none" stroke="#8d58b5" stroke-width="1.300"/><path d="M7.500 4.500h7.500v1.500l-2.500 2v4h-2v-4l-3-2z" fill="#777"/></svg><svg width="7" height="5"><use href="#cv"/></svg></div>
   <div class="rw d2"><svg width="15" height="16"><path d="M.5.500h13.500v15H.5z" fill="#fff" stroke="#777"/><path d="M0 0h14.500v3H0z" fill="#777"/><path d="M7.300 5v8M4 9.700l3.300 3.300 3.300-3.300" fill="none" stroke="#3f76b5" stroke-width="1.600"/></svg><svg width="7" height="5"><use href="#cv"/></svg><svg width="14" height="14"><circle cx="8.800" cy="4.800" r="3.900" fill="none" stroke="#3f76b5" stroke-width="1.300"/><path d="m6 7.500-5.200 5" stroke="#3f76b5" stroke-width="2.200"/></svg><svg width="7" height="5"><use href="#cv"/></svg></div>
   <div class="rw d2"><svg width="15" height="14"><path d="m4 7 5.500-6.500 4 2-4 7.500z" fill="#e8819a"/><path d="m.5 9 2.500-1.500L7.500 11 5 13.500z" fill="#e8819a"/></svg><svg width="7" height="5"><use href="#cv"/></svg></div>
  </div>
  <div class="gl">편집</div>
 </div>
 <div class="sp"></div>
 <div class="gr q8 d-flex flex-column">
  <div class="big"><svg class="ic" width="32" height="32"><circle cx="15" cy="14" r="5.500" fill="#ff9410"/></svg>추가<br>기능</div>
  <div class="gl">추가 기능</div>
 </div>
 <div class="sp"></div>
 <div class="ms-auto align-self-end" style="padding:0 2.500px 4px 0"><svg width="10" height="6"><use href="#up"/></svg></div>
</div>
<div class="fb d-flex">
 <div class="bx nm d-flex align-items-center justify-content-between">H27<svg width="7" height="4"><use href="#tri"/></svg></div>
 <div class="dt"><svg width="2" height="28"><path d="M1 9.500v11" stroke="#999" stroke-width="1.500" stroke-dasharray="1.500 3"/></svg></div>
 <div class="bx fn d-flex align-items-center justify-content-around"><svg width="12" height="11"><use href="#xx"/></svg><svg width="13" height="12"><use href="#vv"/></svg><span class="fst-italic">f<sub>x</sub></span></div>
 <div class="bx fx d-flex align-items-center justify-content-between"><span>e-mail 발송</span><svg width="8" height="7"><use href="#cvg"/></svg></div>
</div>
<div class="d-flex flex-none" style="height:776.800px">
 <div style="width:940.400px" class="flex-shrink-0">
  <div class="rhd" id="rhead"></div>
  <div class="rgrid d-flex" id="rgrid"></div>
 </div>
 <div style="width:3.600px;border-left:1px solid #999"></div>
 <div class="vbar" style="padding-top:2px"><div class="ub"><svg width="14" height="12"><path d="M6 3.500 10 9H2z" fill="#111"/></svg></div><div style="height:25.900px"></div><div class="tm"></div><div style="height:389px"></div><div class="ub"><svg width="14" height="12"><path d="M6 9 9.500 4h-7z" fill="#111"/></svg></div></div>
</div>
<div class="st d-flex" id="rtabs"></div>
<div class="stat d-flex" data-zoom="55"></div>
</div>

<div class="shade"></div>
<div class="frost frost-t"></div>
<div class="frost frost-s"></div>
</div>
<script src="https://cdn.jsdelivr.net/npm/bootstrap@5.3.0/dist/js/bootstrap.bundle.min.js"></script>
<script>
const bars = a => (a || []).map(w => `<i class="wd" style="width:${w}px"></i>`).join('');

// title bars: [gap before, width, height, opacity]
const title = [[22,14,14,.45],[17,15,14,.5],[15,14,14,.4],[36,8,8,.1],[30,4,8,.15],
 [147,48,13,.4],[4,38,13,.45],[4,50,13,.4],[5,55,13,.45],[4,52,12,.3],[24,28,12,.28],
 [70,58,20,1],[26,14,13,.35],[36,8,3,.2],[36,12,12,.28],[34,12,13,.35]];
document.querySelectorAll('[data-title]').forEach(t => {
  t.innerHTML = title.map(([g,w,h,o]) => `<i style="margin-left:${g}px;width:${w}px;height:${h}px;background:rgba(255,255,255,${o});margin-top:7px"></i>`).join('');
});

// left sheet
const hs = {4:18.3,5:13,13:18.1,14:18.1,15:13.1};
const rowH = []; for (let r = 4; r <= 34; r++) rowH.push(hs[r] || 26.09);
const lg = document.getElementById('lgrid');
lg.style.gridTemplateRows = rowH.map(h => h + 'px').join(' ');
let out = '';
const put = (cls, c, r, n, inner='') => out += `<div class="${cls}" style="grid-column:${c};grid-row:${r-3}/span ${n}">${inner}</div>`;
for (let r = 4; r <= 34; r++) {
  put('rh' + (r === 20 ? ' sel' : '') + (r === 5 || r === 15 ? ' cut' : ''), 1, r, 1, r);
  for (let c = 2; c <= 10; c++) put('gc', c, r, 1);
}
put('sb', 11, 4, 31);
[2,4,6,8,10].forEach(c => put('dk', c, 4, 1));
const top1 = {2:[[39,25],[14,17],[24],[23],[39,34],[39,22,35],[36,12]], 4:[[23,22],[17,64],[24,26,17],[34],[23],[34]],
 6:[[24,24],[28,20],[26],[36,20],[40]], 8:[[42,22]], 10:[[48]]};
for (const c in top1) top1[c].forEach((b, i) => put('pc', c, 6 + i, 1, bars(b)));
[[2,76],[4,44],[6,42]].forEach(([c, w]) => put('dk', c, 16, 2, bars([w])));
const low = {2:[[46],[38,22],[42,24]], 4:[[26,24],[32,30],[38,36,28],[34,30,26],[22],[20]], 6:[[100],[70,38],[34,16],[40]]};
for (const c in low) low[c].forEach((b, i) => put('pc', c, 19 + i, 1, bars(b)));
put('cur', 8, 20, 1);
lg.innerHTML = out;

// right sheet: columns of merged blocks, measured in sheet rows
const U = 19.07, cols = [['',20],['A',19.2],['B',53.2],['C',72.3],['D',111.3],['E',33],['F',34.4],['G',144.500],['H',137.500],['I',154.600],['J',41],['K',47],['L',41],['M',31.400]];
document.getElementById('rhead').innerHTML = cols.map(([n,w]) => `<div style="width:${w}px">${n}</div>`).join('');
const one = n => Array.from({length:n}, () => [1]);
const rep = (n, a) => Array.from({length:n}, () => a).flat();
const Y = 'yl';
const body = {
 B: [[[10,[38]]], [[23,[34]]], [[5]]],
 C: [[[1,[40]],[2,[18]],[1,[12]],[1,[10]],[1,[38]],[3,[64],Y],[1,[32]]], [[4,[26]],[4,[42]],[4,[42]],[4,[18],Y],[4,[14],Y],[3,[22]]], [[3,[28]],[2,[26]]]],
 D: [[[1],[1,[42]],[1,[8,62]],[1],[1],[1,[18]],[1,[8,22]],[1,[58]],[1,[70]],[1]], [...rep(5,[[1,[10]],[1],[1,[8,38]],[1,[14,18]]]),[1,[10]],[1],[1,[50]]], [[1,[10]],[1],[1,[48]],[1],[1]]],
 E: [[[1,[20]],[2,[18]],[1,[20]],[1,[20]],[1,[20]],[3,[20]],[1,[20]]], [...rep(5,[[4,[18]]]),[3,[18]]], [[3,[18]],[2]]],
 F: [[[1,[20]],[2,[18]],[1,[20]],[1,[20]],[1,[20]],[3,[20]],[1,[20]]], [...rep(5,[[3,[14]],[1,[22]]]),[3,[18]]], [[3,[18]],[2]]],
 G: [[[1,[26]],[1,[34]],[1,[8,46]],[1,[8]],[1,[76,22]],[1],[3,[88]],[1,[34]]], [[4,[56]],[4,[50]],[4,[104]],[4,[86]],[4,[80]],[3,[112]]], [[3,[50]],[2,[70]]]],
 H: [[[1],[1,[16]],[1,[18]],[1],[1,[118]],[1],[3],[1,[46]]], [...rep(5,[[3,[14,30]],[1,[6,28]]]),[3,[86]]], [[3,[50]],[2,[40]]]],
 I: [[...one(6),[3],[1,[46]]], [...rep(5,[[3],[1]]),[3]], [[3],[2]]],
 J: [[...one(6),[3],[1]], [...one(12),[1,[32]],[1,[32]],...one(9)], one(5)],
 K: [[...one(4),[1,[24]],[1],[3],[1]], [...one(6),[1,[36]],[1,[36]],...one(15)], one(5)],
 L: [[...one(6),[3],[1]], one(23), [[1],[1,[30]],[1],[1],[1]]],
 M: [[...one(6),[3],[1]], one(23), one(5)]
};
const head = {B:34,C:30,D:34,E:24,F:22,G:18,H:34,I:34,J:34,K:26,L:22,M:20};
document.getElementById('rgrid').innerHTML = cols.map(([n, w]) => {
  if (n === '') return `<section class="rc" style="width:${w}px;background:#bdbfbd;border-color:#999"></section>`;
  if (n === 'A') return `<section class="rc" style="width:${w}px;border-color:#ddd;background:#fafafa"></section>`;
  let s = `<section class="rc" style="width:${w}px${'JKLMD'.includes(n) ? ';background:#fafafa' : ''}"><div class="hd">${bars([head[n]])}</div><div class="sh"></div>`;
  body[n].forEach((sec, k) => sec.forEach(([h, b, f], i) => {
    const last = i === sec.length - 1 && k < 2;
    s += `<div class="${last ? 'th ' : ''}${f || ''}" style="height:${h * U}px;gap:3px">${bars(b)}</div>`;
  }));
  return s + '</section>';
}).join('');

// sheet tabs: text widths with the gap before each
const strip = (lead, act, actTxt, list, hgap, hw) => {
  let s = `<svg width="${lead}" height="26"><path d="M34 9v9l-6.500-4.500z" fill="#107040"/><path d="M60 9v9l6-4.500z" fill="#bbb"/></svg><div class="act" style="width:${act}px"><i style="width:${actTxt}px"></i></div><div class="d-flex align-items-center">`;
  s += list.map(([g, w]) => `<i class="wd" style="margin-left:${g}px;width:${w}px"></i>`).join('');
  return s + `</div><div class="hs" style="margin-left:${hgap}px;width:${hw}px"></div>`;
};
document.getElementById('ltabs').innerHTML = strip(100, 78, 44, [[12,42],[5,20],[12,34],[26,38],[6,46],[4,46],[22,8],[42,16],[34,12]], 14, 220);
document.getElementById('rtabs').innerHTML = strip(100.7, 141.500, 112, [[12,36],[6,40],[8,44],[38,38],[6,34],[34,14],[32,12]], 20, 220);
document.querySelector('#rtabs svg').innerHTML = '';

// status bars
document.querySelectorAll('[data-zoom]').forEach(b => {
  const z = +b.dataset.zoom, x = z === 100 ? 50.500 : 26.500;
  b.innerHTML = `<span style="margin-left:11.300px;width:44px">준비</span><svg width="30.700" height="17"><use href="#mac" y="4" width="14" height="14"/></svg><svg width="20" height="17"><use href="#acc" y="4" width="16" height="15"/></svg><b style="width:539.500px">접근성: 조사 필요</b>
  <div class="vw on"><svg width="14" height="13"><use href="#v1"/></svg></div><div class="vw"><svg width="14" height="13"><use href="#v2"/></svg></div><div class="vw"><svg width="14" height="13"><use href="#v3"/></svg></div>
  <svg width="146" height="18"><path d="M6 10h8M124 10h8M128 6v8" stroke="#444" stroke-width="1.300"/><path d="M19 11h100" stroke="#555" stroke-width="1.500"/><path d="M69.500 7.500v7" stroke="#333"/><path d="M${19 + x} 5.500v11" stroke="#333" stroke-width="4"/></svg><span style="font-size:12px">${z}%</span>`;
});
</script>
</body>
</html>
